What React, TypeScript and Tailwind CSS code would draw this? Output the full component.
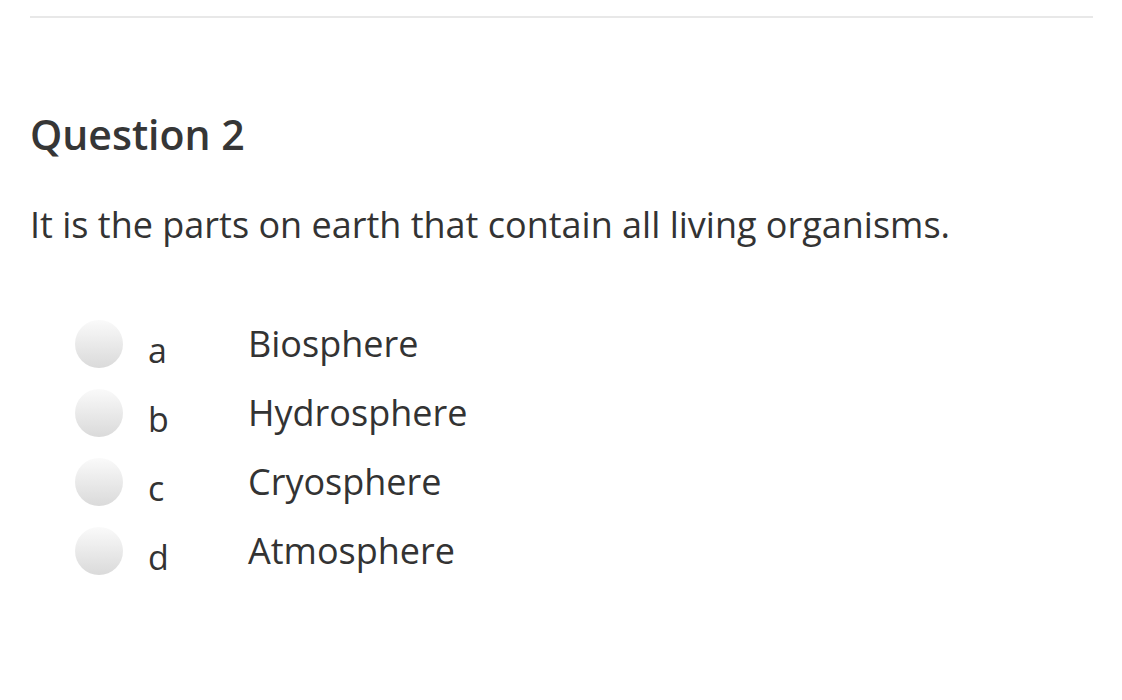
const options = [
  { letter: "a", label: "Biosphere" },
  { letter: "b", label: "Hydrosphere" },
  { letter: "c", label: "Cryosphere" },
  { letter: "d", label: "Atmosphere" },
];

export default function App() {
  return (
    <div className="min-h-[700px] bg-white px-[30px] pt-4 text-[#333333] [font-family:'Open_Sans',sans-serif]">
      <div className="h-[2px] w-[1063px] bg-[#e8e8e8]" />

      <h2 className="mt-[88px] text-[41px] font-semibold leading-[56px] text-[#363636]">Question 2</h2>

      <p className="mt-[40px] text-[36px] leading-[46px]">
        It is the parts on earth that contain all living organisms.
      </p>

      <div className="mt-[72px] flex flex-col gap-[21px] pl-[45px]">
        {options.map((o) => (
          <label key={o.letter} className="flex h-[48px] items-center">
            <span className="h-[48px] w-[48px] shrink-0 rounded-full bg-gradient-to-b from-[#fafafa] to-[#dadada]" />
            <span className="ml-[25px] w-[100px] pt-[12px] text-[34px] leading-none">{o.letter}</span>
            <span className="text-[36px] leading-none">{o.label}</span>
          </label>
        ))}
      </div>
    </div>
  );
}
